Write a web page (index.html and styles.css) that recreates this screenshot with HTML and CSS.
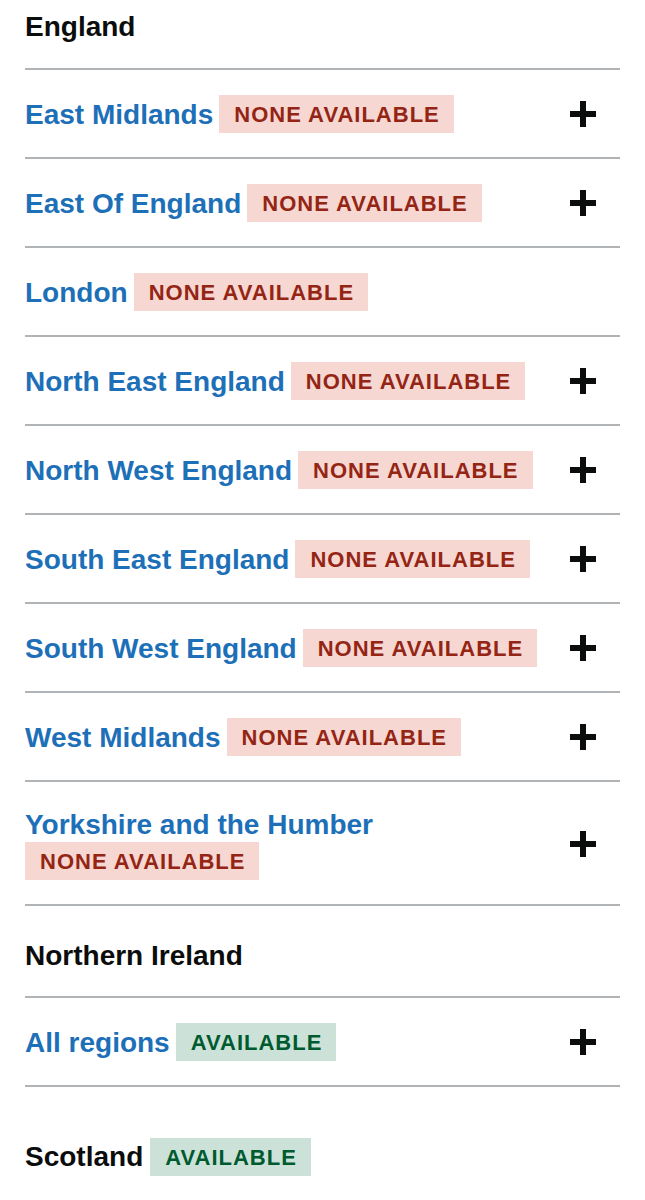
FILE: index.html
```html
<!DOCTYPE html>
<html>
<head>
    <meta charset="UTF-8">
    <title>Regions</title>
    <link rel="stylesheet" href="styles.css">
</head>
<body>
    <div class="regions">
        <h2 class="region-heading region-heading-first">England</h2>
        <ul class="region-list">
            <li class="region-row">
                <div class="region-name"><a href="#">East Midlands</a><strong class="tag tag-red">None available</strong></div>
                <span class="toggle"><svg viewBox="0 0 26 26"><rect x="10" y="0" width="6" height="26"/><rect x="0" y="10" width="26" height="6"/></svg></span>
            </li>
            <li class="region-row">
                <div class="region-name"><a href="#">East Of England</a><strong class="tag tag-red">None available</strong></div>
                <span class="toggle"><svg viewBox="0 0 26 26"><rect x="10" y="0" width="6" height="26"/><rect x="0" y="10" width="26" height="6"/></svg></span>
            </li>
            <li class="region-row">
                <div class="region-name"><a href="#">London</a><strong class="tag tag-red">None available</strong></div>
            </li>
            <li class="region-row">
                <div class="region-name"><a href="#">North East England</a><strong class="tag tag-red">None available</strong></div>
                <span class="toggle"><svg viewBox="0 0 26 26"><rect x="10" y="0" width="6" height="26"/><rect x="0" y="10" width="26" height="6"/></svg></span>
            </li>
            <li class="region-row">
                <div class="region-name"><a href="#">North West England</a><strong class="tag tag-red">None available</strong></div>
                <span class="toggle"><svg viewBox="0 0 26 26"><rect x="10" y="0" width="6" height="26"/><rect x="0" y="10" width="26" height="6"/></svg></span>
            </li>
            <li class="region-row">
                <div class="region-name"><a href="#">South East England</a><strong class="tag tag-red">None available</strong></div>
                <span class="toggle"><svg viewBox="0 0 26 26"><rect x="10" y="0" width="6" height="26"/><rect x="0" y="10" width="26" height="6"/></svg></span>
            </li>
            <li class="region-row">
                <div class="region-name"><a href="#">South West England</a><strong class="tag tag-red">None available</strong></div>
                <span class="toggle"><svg viewBox="0 0 26 26"><rect x="10" y="0" width="6" height="26"/><rect x="0" y="10" width="26" height="6"/></svg></span>
            </li>
            <li class="region-row">
                <div class="region-name"><a href="#">West Midlands</a><strong class="tag tag-red">None available</strong></div>
                <span class="toggle"><svg viewBox="0 0 26 26"><rect x="10" y="0" width="6" height="26"/><rect x="0" y="10" width="26" height="6"/></svg></span>
            </li>
            <li class="region-row">
                <div class="region-name"><a href="#">Yorkshire and the Humber</a><strong class="tag tag-red">None available</strong></div>
                <span class="toggle"><svg viewBox="0 0 26 26"><rect x="10" y="0" width="6" height="26"/><rect x="0" y="10" width="26" height="6"/></svg></span>
            </li>
        </ul>

        <h2 class="region-heading">Northern Ireland</h2>
        <ul class="region-list">
            <li class="region-row">
                <div class="region-name"><a href="#">All regions</a><strong class="tag tag-green">Available</strong></div>
                <span class="toggle"><svg viewBox="0 0 26 26"><rect x="10" y="0" width="6" height="26"/><rect x="0" y="10" width="26" height="6"/></svg></span>
            </li>
        </ul>

        <h2 class="region-heading region-heading-tagged">Scotland<strong class="tag tag-green">Available</strong></h2>
    </div>
</body>
</html>
```

FILE: styles.css
```css
body {
    margin: 0;
    padding: 0 25px;
    font-family: "Liberation Sans", Arial, sans-serif;
    background-color: #ffffff;
    color: #0b0c0c;
}

.regions {
    width: 595px;
}

.region-heading {
    margin: 0;
    padding: 34px 0 24px;
    font-size: 28px;
    line-height: 32px;
    font-weight: bold;
    color: #0b0c0c;
}

.region-heading-first {
    padding-top: 11px;
    padding-bottom: 25px;
}

.region-heading-tagged {
    display: flex;
    align-items: center;
    column-gap: 7px;
    padding-top: 51px;
}

.region-list {
    list-style: none;
    margin: 0;
    padding: 0;
    border-bottom: 2px solid #b1b4b6;
}

.region-row {
    display: flex;
    align-items: center;
    justify-content: space-between;
    padding: 25px 24px 24px 0;
    border-top: 2px solid #b1b4b6;
}

.region-name {
    flex: 1;
    display: flex;
    flex-wrap: wrap;
    align-items: center;
    column-gap: 6px;
}

.region-name a {
    font-size: 28px;
    line-height: 35px;
    font-weight: bold;
    color: #1d70b8;
    text-decoration: none;
}

.tag {
    display: inline-block;
    padding: 9px 14px 7px 15px;
    font-size: 22px;
    line-height: 22px;
    font-weight: bold;
    letter-spacing: 1px;
    text-transform: uppercase;
}

.tag-red {
    color: #942514;
    background-color: #f6d7d2;
}

.tag-green {
    color: #005a30;
    background-color: #cce2d8;
}

.toggle {
    display: block;
    width: 26px;
    height: 26px;
    margin-left: 12px;
}

.toggle svg {
    display: block;
    width: 26px;
    height: 26px;
    fill: #0b0c0c;
}
```
